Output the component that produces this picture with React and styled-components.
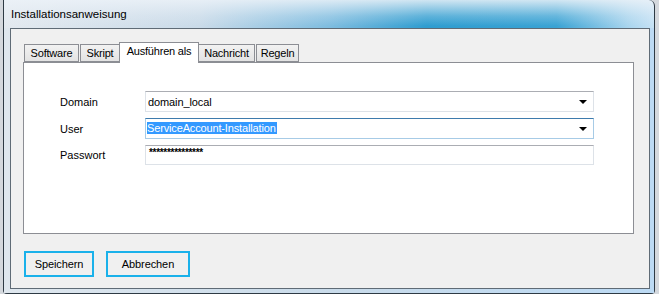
import React from 'react';
import styled, { createGlobalStyle } from 'styled-components';

const GlobalStyle = createGlobalStyle`
  html, body {
    margin: 0;
    padding: 0;
    background: #d4d8dd;
    font-family: "Liberation Sans", Arial, sans-serif;
  }
`;

const Window = styled.div`
  margin-left: 3px;
  width: 650px;
  height: 293px;
  border: 1px solid #2e3a44;
  border-top: none;
  border-top-right-radius: 6px;
  border-bottom-left-radius: 4px;
  border-bottom-right-radius: 4px;
  display: flex;
  flex-direction: column;
  background:
    linear-gradient(to bottom, rgba(236, 242, 248, 0.85) 0px, rgba(236, 242, 248, 0.25) 16px, rgba(236, 242, 248, 0) 26px),
    linear-gradient(to right, #e3e9ef 0%, #cadbe9 30%, #7fbde0 50%, #2f9dd0 65%, #3aa3d4 85%, #a9d5ee 96%, #c6e2f5 100%);
`;

const TitleBar = styled.div`
  height: 28px;
  flex: none;
  display: flex;
  align-items: center;
  padding-left: 7px;
  padding-bottom: 1px;
  box-sizing: border-box;
  font-family: "Liberation Sans", Arial, sans-serif;
  font-size: 11.5px;
  color: #000;
`;

const Frame = styled.div`
  flex: 1;
  background: linear-gradient(to right, #dfe7ee 0%, #c9dbea 50%, #bcdaf4 100%);
  padding: 0 4px 4px 6px;
  display: flex;
`;

const Client = styled.div`
  flex: 1;
  background: #f0f0f0;
  border: 1px solid #5f6b76;
  padding: 13px 0 0 12px;
  display: flex;
  flex-direction: column;
`;

const TabStrip = styled.div`
  display: flex;
  align-items: flex-end;
  height: 20px;
  padding-left: 1px;
`;

const Tab = styled.div`
  width: ${p => p.w}px;
  height: ${p => (p.active ? 21 : 18)}px;
  box-sizing: border-box;
  margin-bottom: ${p => (p.active ? -1 : 0)}px;
  margin-left: ${p => p.ml}px;
  padding-top: 1px;
  text-align: center;
  border: 1px solid #8c8e94;
  border-bottom: ${p => (p.active ? 'none' : '1px solid #8c8e94')};
  background: ${p => (p.active ? '#fff' : 'linear-gradient(#f2f2f2, #e3e3e3)')};
  font-size: 11px;
  letter-spacing: -0.2px;
  line-height: 15px;
  color: #000;
  white-space: nowrap;
  position: relative;
  z-index: ${p => (p.active ? 1 : 0)};
`;

const Panel = styled.div`
  width: 611px;
  height: 172px;
  box-sizing: border-box;
  background: #fff;
  border: 1px solid #8c8e94;
  padding: 28px 0 0 36px;
  display: flex;
  flex-direction: column;
  gap: 6px;
`;

const Row = styled.div`
  display: flex;
  align-items: center;
`;

const Label = styled.div`
  width: 85px;
  font-size: 11px;
  color: #000;
`;

const Field = styled.div`
  width: 449px;
  height: ${p => p.h}px;
  box-sizing: border-box;
  border: 1px solid ${p => (p.focused ? '#a7cbe6' : '#dde2e8')};
  border-top-color: ${p => (p.focused ? '#3d7bad' : '#abadb3')};
  background: #fff;
  display: flex;
  align-items: center;
  padding: 0 6px 0 1px;
  font-size: 11px;
  color: #000;
`;

const Value = styled.span`
  flex: 1;
  line-height: 14px;
  padding-left: 1px;
  letter-spacing: -0.1px;
`;

const Selected = styled.span`
  background: #3399ff;
  color: #fff;
  padding: 0 1px 0 0;
  margin-left: -1px;
  line-height: 15px;
  letter-spacing: -0.15px;
`;

const Stars = styled.span`
  font-size: 10px;
  letter-spacing: -0.3px;
  line-height: 10px;
  margin: -5px 0 0 2px;
  font-weight: bold;
`;

const Arrow = styled.span`
  width: 0;
  height: 0;
  border-left: 4px solid transparent;
  border-right: 4px solid transparent;
  border-top: 4px solid #000;
`;

const ButtonRow = styled.div`
  display: flex;
  gap: 12px;
  margin: 17px 0 0 1px;
`;

const Button = styled.button`
  width: ${p => p.w}px;
  height: 26px;
  box-sizing: border-box;
  border: 2px solid #1ab1ea;
  background: #f0f0f0;
  font-family: "Liberation Sans", Arial, sans-serif;
  font-size: 11px;
  letter-spacing: -0.1px;
  color: #000;
  padding: 0;
`;

const tabs = [
  { label: 'Software', w: 55, ml: 0 },
  { label: 'Skript', w: 40, ml: 1 },
  { label: 'Ausführen als', w: 80, ml: -1, active: true },
  { label: 'Nachricht', w: 57, ml: -1 },
  { label: 'Regeln', w: 43, ml: 1 },
];

export default function App() {
  return (
    <>
      <GlobalStyle />
      <Window>
        <TitleBar>Installationsanweisung</TitleBar>
        <Frame>
          <Client>
            <TabStrip>
              {tabs.map(t => (
                <Tab key={t.label} w={t.w} ml={t.ml} active={t.active}>{t.label}</Tab>
              ))}
            </TabStrip>
            <Panel>
              <Row>
                <Label>Domain</Label>
                <Field h={21}>
                  <Value>domain_local</Value>
                  <Arrow />
                </Field>
              </Row>
              <Row>
                <Label>User</Label>
                <Field h={21} focused>
                  <Value><Selected>ServiceAccount-Installation</Selected></Value>
                  <Arrow />
                </Field>
              </Row>
              <Row>
                <Label>Passwort</Label>
                <Field h={20}>
                  <Stars>***************</Stars>
                </Field>
              </Row>
            </Panel>
            <ButtonRow>
              <Button w={70}>Speichern</Button>
              <Button w={84}>Abbrechen</Button>
            </ButtonRow>
          </Client>
        </Frame>
      </Window>
    </>
  );
}
